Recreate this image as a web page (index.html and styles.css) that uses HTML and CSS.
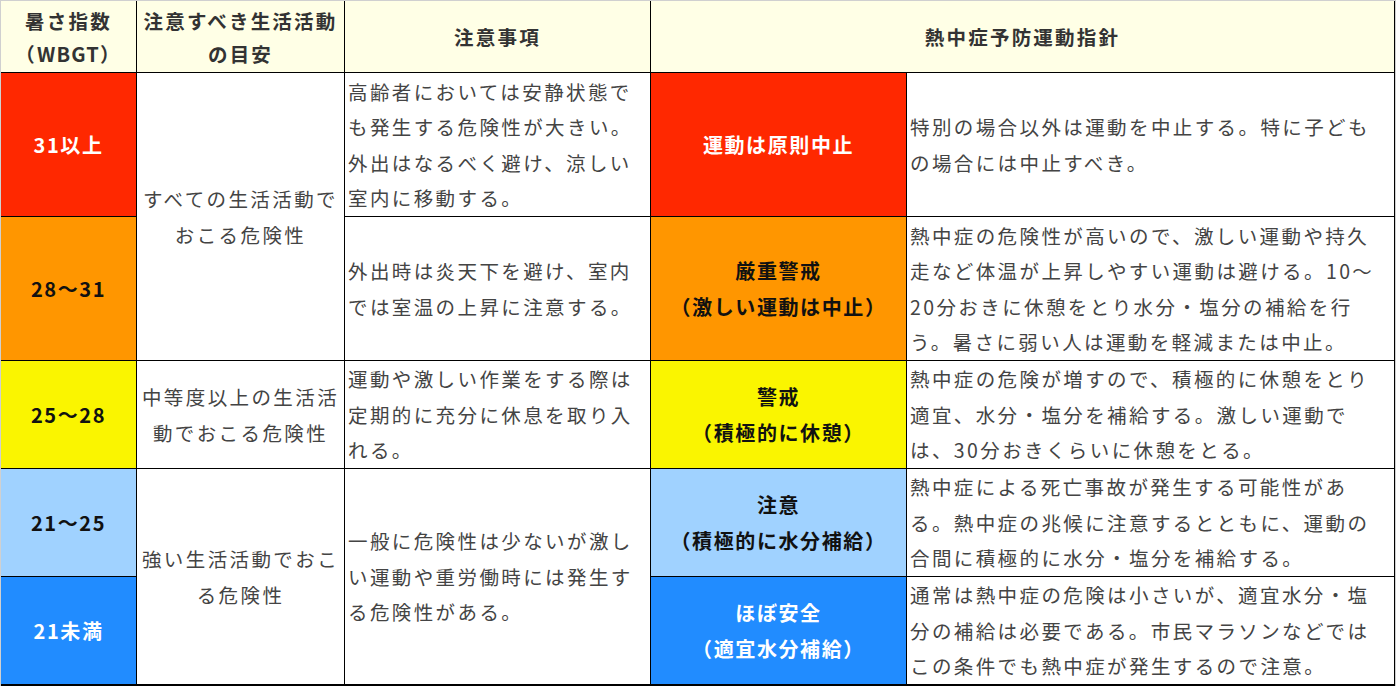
FILE: index.html
```html
<!DOCTYPE html>
<html lang="ja">
<head>
<meta charset="utf-8">
<title>暑さ指数（WBGT）と熱中症予防運動指針</title>
<link rel="stylesheet" href="styles.css">
</head>
<body>
<div class="frame">
  <div class="sheet">
    <div class="cell head"><p>暑さ指数<br>（<span class="lat">WBGT</span>）</p></div>
    <div class="cell head"><p>注意すべき生活活動<br>の目安</p></div>
    <div class="cell head"><p>注意事項</p></div>
    <div class="cell head span-c2"><p>熱中症予防運動指針</p></div>

    <div class="cell lv lv1 light"><p>31以上</p></div>
    <div class="cell mid span-r2"><p>すべての生活活動で<br>おこる危険性</p></div>
    <div class="cell txt"><p>高齢者においては安静状態で<br>も発生する危険性が大きい。<br>外出はなるべく避け、涼しい<br>室内に移動する。</p></div>
    <div class="cell lv lv1 light"><p>運動は原則中止</p></div>
    <div class="cell txt"><p>特別の場合以外は運動を中止する。特に子ども<br>の場合には中止すべき。</p></div>

    <div class="cell lv lv2"><p>28～31</p></div>
    <div class="cell txt"><p>外出時は炎天下を避け、室内<br>では室温の上昇に注意する。</p></div>
    <div class="cell lv lv2"><p>厳重警戒<br>（激しい運動は中止）</p></div>
    <div class="cell txt"><p>熱中症の危険性が高いので、激しい運動や持久<br>走など体温が上昇しやすい運動は避ける。10～<br>20分おきに休憩をとり水分・塩分の補給を行<br>う。暑さに弱い人は運動を軽減または中止。</p></div>

    <div class="cell lv lv3"><p>25～28</p></div>
    <div class="cell mid"><p>中等度以上の生活活<br>動でおこる危険性</p></div>
    <div class="cell txt"><p>運動や激しい作業をする際は<br>定期的に充分に休息を取り入<br>れる。</p></div>
    <div class="cell lv lv3"><p>警戒<br>（積極的に休憩）</p></div>
    <div class="cell txt"><p>熱中症の危険が増すので、積極的に休憩をとり<br>適宜、水分・塩分を補給する。激しい運動で<br>は、30分おきくらいに休憩をとる。</p></div>

    <div class="cell lv lv4"><p>21～25</p></div>
    <div class="cell mid span-r2"><p>強い生活活動でおこ<br>る危険性</p></div>
    <div class="cell txt span-r2"><p>一般に危険性は少ないが激し<br>い運動や重労働時には発生す<br>る危険性がある。</p></div>
    <div class="cell lv lv4"><p>注意<br>（積極的に水分補給）</p></div>
    <div class="cell txt"><p>熱中症による死亡事故が発生する可能性があ<br>る。熱中症の兆候に注意するとともに、運動の<br>合間に積極的に水分・塩分を補給する。</p></div>

    <div class="cell lv lv5 light"><p>21未満</p></div>
    <div class="cell lv lv5 light"><p>ほぼ安全<br>（適宜水分補給）</p></div>
    <div class="cell txt"><p>通常は熱中症の危険は小さいが、適宜水分・塩<br>分の補給は必要である。市民マラソンなどでは<br>この条件でも熱中症が発生するので注意。</p></div>
  </div>
</div>
</body>
</html>
```

FILE: styles.css
```css
html, body {
  margin: 0;
  padding: 0;
  background: #ffffff;
}

.frame {
  width: 1396px;
  height: 686px;
  box-sizing: border-box;
  background: #d0d0d0;
  padding: 1px 1px 0 1px;
  overflow: hidden;
}

.sheet {
  display: grid;
  grid-template-columns: 135px 207px 305px 255px 487px;
  grid-template-rows: 71px 143px 143px 107px 107px 107px;
  gap: 1px;
  background: #000000;
  border-right: 1px solid #000000;
  border-bottom: 2px solid #000000;
  font-family: "Noto Sans CJK JP", "Noto Sans", sans-serif;
  color: #444444;
}

.cell {
  display: flex;
  align-items: center;
  background: #ffffff;
  overflow: hidden;
  min-width: 0;
}

.cell p {
  margin: 0;
  white-space: nowrap;
}

.span-c2 { grid-column: span 2; }
.span-r2 { grid-row: span 2; }

.head {
  background: #ffffe6;
  justify-content: center;
  text-align: center;
  font-weight: 700;
  font-size: 19.5px;
  line-height: 33px;
  letter-spacing: 2.2px;
  color: #333333;
}

.head .lat {
  letter-spacing: 1.2px;
  font-size: 20px;
}

.mid {
  justify-content: center;
  text-align: center;
  font-size: 19.5px;
  line-height: 36px;
  letter-spacing: 2.4px;
}

.txt {
  justify-content: flex-start;
  padding-left: 3px;
  font-size: 19.5px;
  line-height: 35.5px;
  letter-spacing: 2.4px;
}

.lv {
  justify-content: center;
  text-align: center;
  font-weight: 700;
  font-size: 20px;
  line-height: 36px;
  letter-spacing: 1.6px;
  color: #111111;
}

.lv.light { color: #ffffff; }

.lv1 { background: #ff2800; }
.lv2 { background: #ff9600; }
.lv3 { background: #faf500; }
.lv4 { background: #a0d2ff; }
.lv5 { background: #218cff; }
```
